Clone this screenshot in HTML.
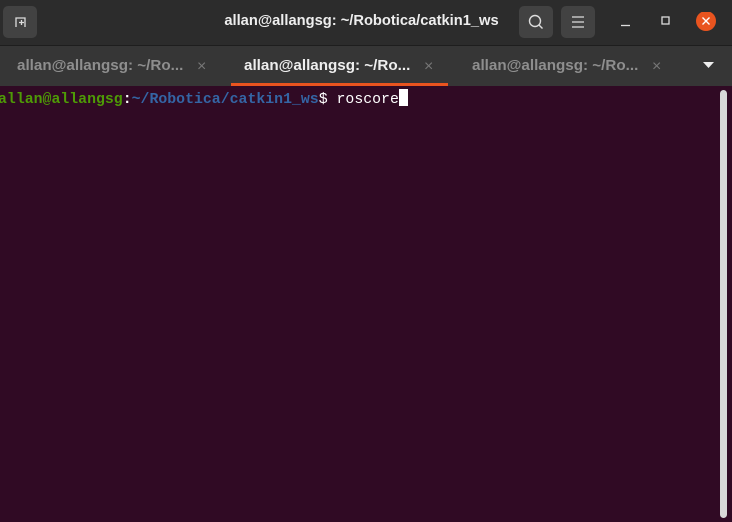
<!DOCTYPE html><html><head><style>
body{margin:0;width:732px;height:522px;overflow:hidden;background:#300a24;font-family:"Liberation Sans",sans-serif;position:relative}
.hd{position:absolute;left:0;top:0;width:732px;height:45px;background:#2c2c2c;border-bottom:1px solid #1e1e1e}
.btn{position:absolute;top:6px;width:34px;height:32px;background:#424242;border-radius:5px}
.title{position:absolute;top:13px;left:0;width:723px;text-align:center;color:#eee;font-weight:bold;font-size:14.7px}
.tabs{position:absolute;left:0;top:46px;width:732px;height:40px;background:#363636}
.tab{position:absolute;top:11px;font-size:15.2px;font-weight:bold;color:#8e8e8e}
.x{position:absolute;top:12px;color:#777;font-size:16px}
.term{position:absolute;left:-2px;top:89px;font-family:"Liberation Mono",monospace;font-size:14.85px;color:#fff;white-space:pre;line-height:18px;font-weight:bold}
</style></head><body>
<div class="hd">
<div class="btn" style="left:3px"><svg width="34" height="32"><path d="M13 21V12h9v9M16 16.5h5M18.5 14v5" stroke="#ddd" stroke-width="1.3" fill="none"/></svg></div>
<div class="title">allan@allangsg: ~/Robotica/catkin1_ws</div>
<div class="btn" style="left:519px"><svg width="34" height="32"><circle cx="16" cy="15" r="5.5" stroke="#ddd" stroke-width="1.4" fill="none"/><path d="M20 19l3.5 3.5" stroke="#ddd" stroke-width="1.4"/></svg></div>
<div class="btn" style="left:561px"><svg width="34" height="32"><path d="M11 11h12M11 16h12M11 21h12" stroke="#ddd" stroke-width="1.2"/></svg></div>
<svg style="position:absolute;left:615px;top:12px" width="110" height="22"><path d="M6 13.5h9" stroke="#ddd" stroke-width="1.3"/><rect x="47" y="5" width="7" height="7" stroke="#ddd" stroke-width="1.3" fill="none"/><circle cx="91" cy="9" r="10" fill="#e9541f"/><path d="M87.5 5.5l7 7M94.5 5.5l-7 7" stroke="#fff" stroke-width="1.4"/></svg>
</div>
<div class="tabs">
<div class="tab" style="left:17px">allan@allangsg: ~/Ro...</div><div class="x" style="left:197px">×</div>
<div class="tab" style="left:244px;color:#eee">allan@allangsg: ~/Ro...</div><div class="x" style="left:424px">×</div>
<div class="tab" style="left:472px">allan@allangsg: ~/Ro...</div><div class="x" style="left:652px">×</div>
<svg style="position:absolute;left:703px;top:16px" width="12" height="8"><path d="M0 0h11L5.5 6z" fill="#eee"/></svg>
<div style="position:absolute;left:231px;top:37px;width:217px;height:3px;background:#e9541f"></div>
</div>
<div class="term"><span style="color:#4e9a06">allan@allangsg</span>:<span style="color:#3465a4">~/Robotica/catkin1_ws</span><span style="font-weight:normal">$ roscore</span><span style="display:inline-block;width:9px;height:17px;background:#fff;vertical-align:-3px"></span></div>
<div style="position:absolute;left:720px;top:90px;width:7px;height:428px;background:#d8d8d8;border-radius:4px"></div>
</body></html>
